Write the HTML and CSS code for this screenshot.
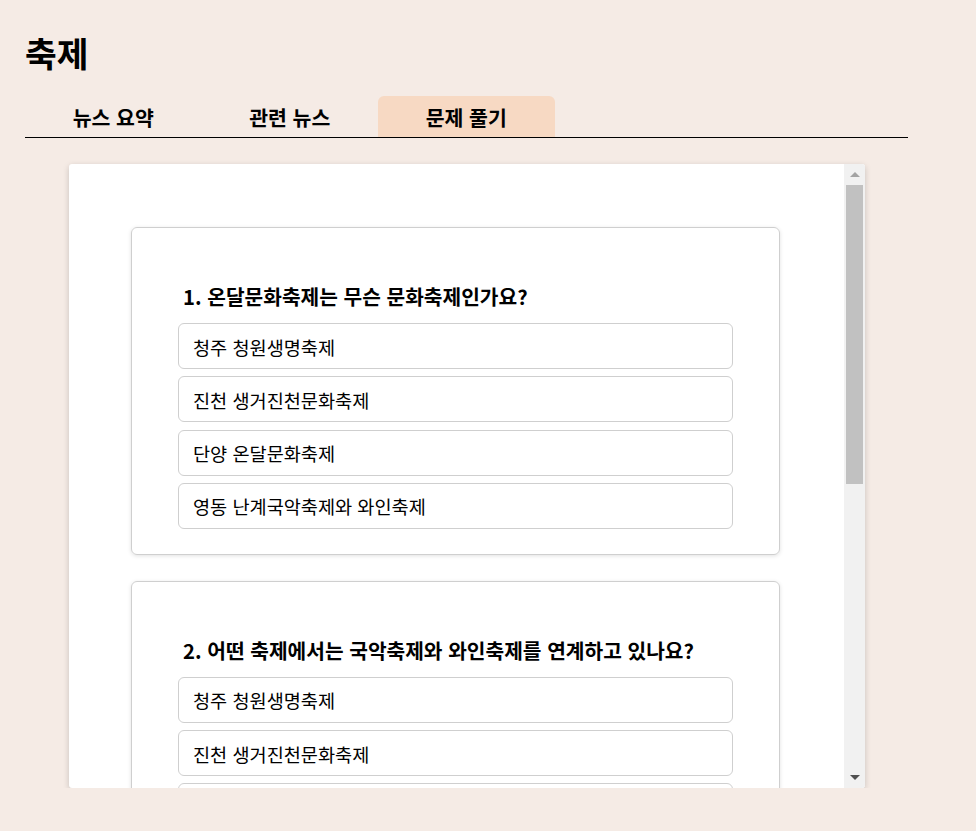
FILE: index.html
```html
<!DOCTYPE html>
<html lang="ko">
<head>
<meta charset="utf-8">
<title>축제</title>
<link rel="stylesheet" href="styles.css">
</head>
<body>
<div class="page">
  <h1 class="title">축제</h1>
  <div class="tabs">
    <div class="tab">뉴스 요약</div>
    <div class="tab">관련 뉴스</div>
    <div class="tab active">문제 풀기</div>
  </div>
  <div class="panel">
    <div class="panel-content">
      <div class="card">
        <h2 class="question">1. 온달문화축제는 무슨 문화축제인가요?</h2>
        <div class="option">청주 청원생명축제</div>
        <div class="option">진천 생거진천문화축제</div>
        <div class="option">단양 온달문화축제</div>
        <div class="option">영동 난계국악축제와 와인축제</div>
      </div>
      <div class="card">
        <h2 class="question">2. 어떤 축제에서는 국악축제와 와인축제를 연계하고 있나요?</h2>
        <div class="option">청주 청원생명축제</div>
        <div class="option">진천 생거진천문화축제</div>
        <div class="option">단양 온달문화축제</div>
        <div class="option">영동 난계국악축제와 와인축제</div>
      </div>
    </div>
    <div class="scrollbar">
      <div class="arrow"><span class="tri-up"></span></div>
      <div class="track">
        <div class="thumb"></div>
      </div>
      <div class="arrow"><span class="tri-down"></span></div>
    </div>
  </div>
</div>
</body>
</html>
```

FILE: styles.css
```css
* { box-sizing: border-box; }
html, body { margin: 0; padding: 0; }
body {
  background: #f5ebe5;
  font-family: "Noto Sans CJK KR", "Noto Sans", sans-serif;
  color: #000;
}
.page {
  width: 908px;
  padding: 0 0 0 25px;
}
.title {
  margin: 0;
  padding-top: 30px;
  font-size: 34.5px;
  line-height: 44px;
  font-weight: 700;
}
.tabs {
  display: flex;
  margin-top: 22px;
  border-bottom: 1px solid #000;
}
.tab {
  width: 176.5px;
  height: 41px;
  display: flex;
  align-items: center;
  justify-content: center;
  font-size: 20.5px;
  font-weight: 700;
  border-radius: 6px 6px 0 0;
}
.tab.active { background: #f7d9c3; }
.panel {
  margin: 26px 0 0 44px;
  width: 796px;
  height: 624px;
  background: #fff;
  display: flex;
  box-shadow: 0 2px 6px rgba(0,0,0,0.18);
  border-radius: 3px;
  overflow: hidden;
}
.panel-content {
  flex: 1;
  overflow: hidden;
  padding: 63px 64px 0 62px;
}
.card {
  border: 1px solid #cfcfcf;
  border-radius: 6px;
  box-shadow: 0 1px 4px rgba(0,0,0,0.12);
  padding: 0 46px 25px 46px;
  margin-bottom: 26px;
}
.question {
  margin: 54px 0 13px 0;
  padding-left: 5px;
  font-size: 20.3px;
  line-height: 28px;
  font-weight: 700;
}
.option {
  height: 46px;
  border: 1px solid #cfcfcf;
  border-radius: 6px;
  display: flex;
  align-items: center;
  padding-left: 14px;
  font-size: 18.6px;
  margin-bottom: 7.3px;
}
.option:last-child { margin-bottom: 0; }
.scrollbar {
  width: 21px;
  flex: none;
  background: #f1f1f1;
  display: flex;
  flex-direction: column;
}
.arrow {
  height: 21px;
  display: flex;
  align-items: center;
  justify-content: center;
}
.track {
  flex: 1;
  padding: 0 2px;
}
.thumb {
  height: 299px;
  background: #c1c1c1;
}
.tri-up {
  width: 0;
  height: 0;
  border-left: 5px solid transparent;
  border-right: 5px solid transparent;
  border-bottom: 5px solid #a3a3a3;
}
.tri-down {
  width: 0;
  height: 0;
  border-left: 5px solid transparent;
  border-right: 5px solid transparent;
  border-top: 5px solid #505050;
}
```
